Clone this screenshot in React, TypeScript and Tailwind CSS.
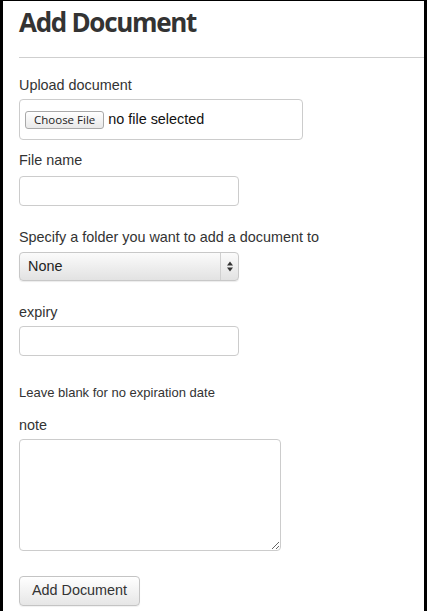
import React from 'react'

function Label({children, className = ''}: {children: React.ReactNode; className?: string}) {
  return <div className={`text-[14.4px] leading-[20px] text-[#333] ${className}`}>{children}</div>
}

export default function App() {
  return (
    <div className="w-[427px] h-[611px] bg-black pt-[1px] pl-[3px] pr-[3px] overflow-hidden" style={{fontFamily: '"Liberation Sans", Arial, sans-serif'}}>
      <div className="bg-white h-full pl-[16px]">
        <h1 className="text-[26px] leading-[32px] font-bold text-[#333] pt-[5px] tracking-[-1.3px]" style={{fontFamily: '"Open Sans", sans-serif'}}>
          Add Document
        </h1>
        <div className="mt-[19px] border-t border-[#cfcfcf]" />

        <Label className="mt-[17px]">Upload document</Label>
        <div className="mt-[4px] w-[284px] h-[41px] border border-[#ccc] rounded-[4px] flex items-center pl-[5px] gap-[4px]">
          <button className="h-[18px] px-[8px] text-[11.5px] leading-[16px] text-[#222] border border-[#a9a9a9] rounded-[3px] bg-gradient-to-b from-white to-[#e9e9e9]" style={{fontFamily: '"Open Sans", sans-serif'}}>
            Choose File
          </button>
          <span className="text-[14.4px] text-[#111]">no file selected</span>
        </div>

        <Label className="mt-[10px]">File name</Label>
        <input className="mt-[6px] block w-[220px] h-[30px] border border-[#ccc] rounded-[4px] outline-none" />

        <Label className="mt-[21px]">Specify a folder you want to add a document to</Label>
        <div className="mt-[5px] w-[220px] h-[29px] border border-[#c8c8c8] rounded-[4px] flex items-stretch bg-gradient-to-b from-[#fbfbfb] to-[#e2e2e2] shadow-[0_1px_1px_rgba(0,0,0,0.08)]">
          <span className="flex-1 flex items-center pl-[8px] text-[14.4px] text-[#222]">None</span>
          <span className="w-[18px] border-l border-[#d0d0d0] flex items-center justify-center">
            <svg width="6" height="11" viewBox="0 0 6 11">
              <path d="M3 0.5 L6 4.5 H0 Z" fill="#333" />
              <path d="M3 10.5 L6 6.5 H0 Z" fill="#333" />
            </svg>
          </span>
        </div>

        <Label className="mt-[21px]">expiry</Label>
        <input className="mt-[4px] block w-[220px] h-[30px] border border-[#ccc] rounded-[4px] outline-none" />

        <div className="mt-[27px] text-[13px] leading-[20px] text-[#333]">Leave blank for no expiration date</div>

        <Label className="mt-[12px]">note</Label>
        <textarea className="mt-[4px] block w-[262px] h-[112px] border border-[#ccc] rounded-[4px] outline-none" />

        <button className="mt-[25px] w-[121px] h-[30px] border border-[#c4c4c4] rounded-[4px] bg-gradient-to-b from-white to-[#e6e6e6] text-[14.4px] text-[#333] shadow-[0_1px_1px_rgba(0,0,0,0.06)]">
          Add Document
        </button>
      </div>
    </div>
  )
}
